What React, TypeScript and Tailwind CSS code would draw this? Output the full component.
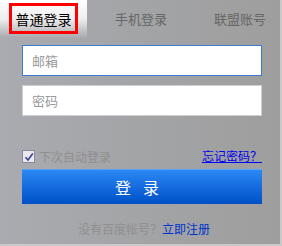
import React from "react";

export default function App() {
  const font = { fontFamily: '"Noto Sans CJK SC", "Liberation Sans", sans-serif' };
  return (
    <div
      className="w-[282px] h-[246px] overflow-hidden flex flex-col border-r-2 border-b-2 border-[#c9c9c9] bg-gradient-to-r from-[#a9abb0] via-[#a3a4a6] to-[#9e9e9e]"
      style={font}
    >
      <div className="flex h-[38px]">
        <div className="w-[87px] h-[38px] pl-[9px] pt-[3px] bg-gradient-to-b from-white via-[#eeeeee] to-[#a8a9ad]">
          <div className="w-[69px] h-[31px] border-[3px] border-[#ff0000] flex items-center justify-center text-[14px] text-black leading-none">
            普通登录
          </div>
        </div>
        <div className="w-[108px] flex items-center justify-center text-[13px] text-[#666] pb-[1px]">
          手机登录
        </div>
        <div className="flex-1 flex items-center justify-center text-[13px] text-[#666] pb-[1px] pl-[5px]">
          联盟账号
        </div>
      </div>
      <div className="flex flex-col px-[22px] pr-[18px] mt-[7px]">
        <div className="h-[31px] bg-white border border-[#3b7bd4] flex items-center pl-[9px] text-[13px] text-[#999]">
          邮箱
        </div>
        <div className="h-[31px] mt-[9px] bg-white border border-[#cfcfcf] flex items-center pl-[9px] text-[13px] text-[#999]">
          密码
        </div>
        <div className="flex items-end justify-between mt-[30px] h-[17px]">
          <div className="flex items-center gap-[4px] text-[12px] text-[#8f8f8f] leading-none">
            <span className="w-[13px] h-[13px] bg-[#e8e8ee] border border-[#8a8a9a] flex items-center justify-center">
              <svg width="10" height="10" viewBox="0 0 10 10">
                <path d="M1.5 5.2 L4 8 L8.8 1.5" stroke="#3a3f8f" strokeWidth="1.6" fill="none" />
              </svg>
            </span>
            下次自动登录
          </div>
          <a className="text-[12px] text-[#0000ee] underline leading-none pb-[1px]">忘记密码？</a>
        </div>
        <button className="mt-[6px] h-[35px] w-full bg-gradient-to-b from-[#2b88f5] to-[#004fc6] border-t border-[#5aa0f5] text-white text-[16px] tracking-[12px] pl-[2px] flex items-center justify-center">
          登录
        </button>
        <div className="mt-[19px] flex justify-center text-[12px] leading-none pl-[4px]">
          <span className="text-[#8f8f8f]">没有百度帐号？</span>
          <a className="text-[#0033cc]">立即注册</a>
        </div>
      </div>
    </div>
  );
}
